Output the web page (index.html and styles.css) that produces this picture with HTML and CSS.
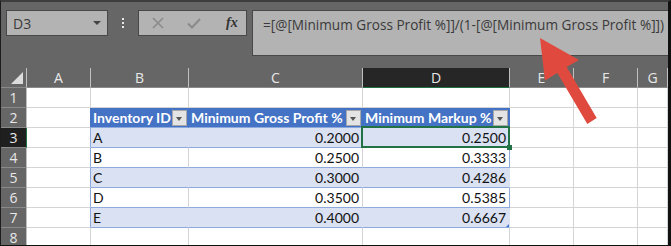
FILE: index.html
```html
<!DOCTYPE html>
<html lang="en">
<head>
  <meta charset="UTF-8">
  <title>Minimum Markup</title>
  <link rel="stylesheet" href="styles.css">
</head>
<body>
  <div class="frame">
    <!-- 编辑栏 -->
    <div class="toolbar">
      <div class="name-box">
        <span>D3</span>
        <span class="caret"></span>
      </div>
      <div class="grip"><i></i><i></i><i></i></div>
      <div class="fx-box">
        <svg class="ico" width="12" height="12" viewBox="0 0 12 12"><path d="M1 1L11 11M11 1L1 11" stroke="#8a8a8a" stroke-width="1.6" fill="none"/></svg>
        <svg class="ico" width="14" height="11" viewBox="0 0 14 11"><path d="M1 5.5L5 9.5L13 1" stroke="#8a8a8a" stroke-width="2" fill="none"/></svg>
        <span class="fx">fx</span>
      </div>
      <div class="formula">=[@[Minimum Gross Profit %]]/(1-[@[Minimum Gross Profit %]])</div>
    </div>

    <!-- 表格 -->
    <div class="sheet">
      <div class="hd corner"><span class="tri"></span></div>
      <div class="hd">A</div>
      <div class="hd">B</div>
      <div class="hd">C</div>
      <div class="hd cur">D</div>
      <div class="hd">E</div>
      <div class="hd">F</div>
      <div class="hd">G</div>

      <div class="rn">1</div>
      <div class="c"></div><div class="c"></div><div class="c"></div><div class="c"></div><div class="c"></div><div class="c"></div><div class="c"></div>

      <div class="rn">2</div>
      <div class="c tl-th"></div>
      <div class="c th"><span>Inventory ID</span><span class="flt"></span></div>
      <div class="c th"><span>Minimum Gross Profit %</span><span class="flt"></span></div>
      <div class="c th last"><span>Minimum Markup %</span><span class="flt"></span></div>
      <div class="c"></div><div class="c"></div><div class="c"></div>

      <div class="rn cur">3</div>
      <div class="c tl"></div>
      <div class="c td band">A</div>
      <div class="c td band num">0.2000</div>
      <div class="c td band num last sel">0.2500</div>
      <div class="c"></div><div class="c"></div><div class="c"></div>

      <div class="rn">4</div>
      <div class="c tl"></div>
      <div class="c td">B</div>
      <div class="c td num">0.2500</div>
      <div class="c td num last">0.3333</div>
      <div class="c"></div><div class="c"></div><div class="c"></div>

      <div class="rn">5</div>
      <div class="c tl"></div>
      <div class="c td band">C</div>
      <div class="c td band num">0.3000</div>
      <div class="c td band num last">0.4286</div>
      <div class="c"></div><div class="c"></div><div class="c"></div>

      <div class="rn">6</div>
      <div class="c tl"></div>
      <div class="c td">D</div>
      <div class="c td num">0.3500</div>
      <div class="c td num last">0.5385</div>
      <div class="c"></div><div class="c"></div><div class="c"></div>

      <div class="rn">7</div>
      <div class="c tl"></div>
      <div class="c td band">E</div>
      <div class="c td band num">0.4000</div>
      <div class="c td band num last grip-end">0.6667</div>
      <div class="c"></div><div class="c"></div><div class="c"></div>

      <div class="rn">8</div>
      <div class="c"></div><div class="c"></div><div class="c"></div><div class="c"></div><div class="c"></div><div class="c"></div><div class="c"></div>
    </div>

    <!-- 红色箭头 -->
    <svg class="arrow" width="671" height="246" viewBox="0 0 671 246">
      <polygon points="540,38 579,60 566.7,67.1 596.7,118.1 587.3,123.9 557.3,72.9 545,80.5" fill="#e04a3e"/>
    </svg>
  </div>
</body>
</html>
```

FILE: styles.css
```css
body {
  margin: 0;
  font-family: "Open Sans", "Noto Sans", sans-serif;
}

.frame {
  position: relative;
  width: 671px;
  height: 246px;
  box-sizing: border-box;
  border-top: 2px solid #3d3d3d;
  border-left: 1px solid #1c1c1c;
  border-right: 3px solid #111;
  border-bottom: 1px solid #111;
  background-color: #666;
  overflow: hidden;
}

.toolbar {
  display: flex;
  align-items: flex-start;
  height: 64px;
  padding: 8px 0 0 5px;
  box-sizing: border-box;
}

.name-box {
  flex-shrink: 0;
  display: flex;
  align-items: center;
  justify-content: space-between;
  width: 102px;
  height: 26px;
  box-sizing: border-box;
  padding: 0 6px 0 6px;
  background-color: #b3b3b3;
  border: 1px solid #484848;
  color: #3a3a3a;
  font-size: 14px;
}

.caret {
  width: 0;
  height: 0;
  border-left: 4px solid transparent;
  border-right: 4px solid transparent;
  border-top: 4px solid #444;
}

.grip {
  flex-shrink: 0;
  width: 30px;
  height: 26px;
  display: flex;
  flex-direction: column;
  align-items: center;
  justify-content: center;
  gap: 2px;
}

.grip i {
  width: 2px;
  height: 2px;
  background-color: #e8e8e8;
}

.fx-box {
  flex-shrink: 0;
  display: flex;
  align-items: center;
  width: 109px;
  height: 26px;
  box-sizing: border-box;
  padding-left: 13px;
  background-color: #b3b3b3;
  border: 1px solid #484848;
}

.ico {
  margin-right: 23px;
}

.fx {
  font-family: "Liberation Serif", serif;
  font-style: italic;
  font-weight: bold;
  font-size: 14px;
  color: #333;
  margin-left: 2px;
}

.formula {
  margin-left: 5px;
  flex: 1;
  min-width: 0;
  height: 46px;
  box-sizing: border-box;
  padding: 4px 0 0 10px;
  background-color: #b3b3b3;
  border: 1px solid #484848;
  border-right: none;
  color: #3a3a3a;
  font-size: 13.6px;
  white-space: nowrap;
  overflow: hidden;
}

.sheet {
  display: grid;
  grid-template-columns: 26px 64px 98px 174px 147px 64px 64px 30px;
  grid-auto-rows: 20px;
  margin-top: 2px;
}

.sheet > div {
  box-sizing: border-box;
  border-right: 1px solid #d4d4d4;
  border-bottom: 1px solid #d4d4d4;
  white-space: nowrap;
}

.sheet .hd {
  background-color: #666;
  color: #e8e8e8;
  font-size: 14px;
  text-align: center;
  line-height: 19px;
  border-right-color: #c0c0c0;
  border-bottom-color: #8a8a8a;
}

.sheet .hd.cur {
  background-color: #262626;
  border-bottom-color: #217346;
}

.corner {
  position: relative;
}

.tri {
  position: absolute;
  right: 3px;
  bottom: 3px;
  width: 0;
  height: 0;
  border-left: 12px solid transparent;
  border-bottom: 12px solid #dcdcdc;
}

.sheet .rn {
  background-color: #666;
  color: #e8e8e8;
  font-size: 14px;
  text-align: center;
  line-height: 20px;
  border-right-color: #c0c0c0;
  border-bottom-color: #8a8a8a;
}

.sheet .rn.cur {
  background-color: #1f1f1f;
  border-right-color: #217346;
}

.c {
  background-color: #fff;
  font-family: "Lato", "Liberation Sans", sans-serif;
  font-size: 14px;
  color: #111;
}

.sheet .tl-th {
  border-right-color: #4472c4;
}

.sheet .tl {
  border-right-color: #8ea9db;
}

.sheet .th {
  display: flex;
  align-items: center;
  justify-content: space-between;
  padding: 0 1px 0 2px;
  background-color: #4472c4;
  color: #fff;
  font-weight: bold;
  border-right-color: #4472c4;
  border-bottom-color: #8ea9db;
}

.flt {
  flex-shrink: 0;
  position: relative;
  width: 15px;
  height: 16px;
  box-sizing: border-box;
  background-color: #e4e4e4;
  border: 1px solid #a8a8a8;
}

.flt::after {
  content: "";
  position: absolute;
  left: 3px;
  top: 6px;
  border-left: 3.5px solid transparent;
  border-right: 3.5px solid transparent;
  border-top: 4px solid #555;
}

.sheet .td {
  padding: 1px 3px 0 2px;
  line-height: 18px;
  border-bottom-color: #8ea9db;
}

.sheet .td.band {
  background-color: #d9e1f2;
  border-right-color: #d9e1f2;
}

.num {
  text-align: right;
}

.sheet .last {
  border-right-color: #8ea9db;
}

.sheet .th.last {
  border-right-color: #4472c4;
}

.sel,
.grip-end {
  position: relative;
}

.sel::before {
  content: "";
  position: absolute;
  top: -2px;
  left: -2px;
  right: -1px;
  bottom: -1px;
  border: 2px solid #217346;
}

.sel::after {
  content: "";
  position: absolute;
  right: -3px;
  bottom: -3px;
  width: 5px;
  height: 5px;
  background-color: #217346;
}

.grip-end::after {
  content: "";
  position: absolute;
  right: 0;
  bottom: 0;
  width: 0;
  height: 0;
  border-left: 3px solid transparent;
  border-bottom: 3px solid #4472c4;
}

.arrow {
  position: absolute;
  left: -1px;
  top: -2px;
  pointer-events: none;
}
```
